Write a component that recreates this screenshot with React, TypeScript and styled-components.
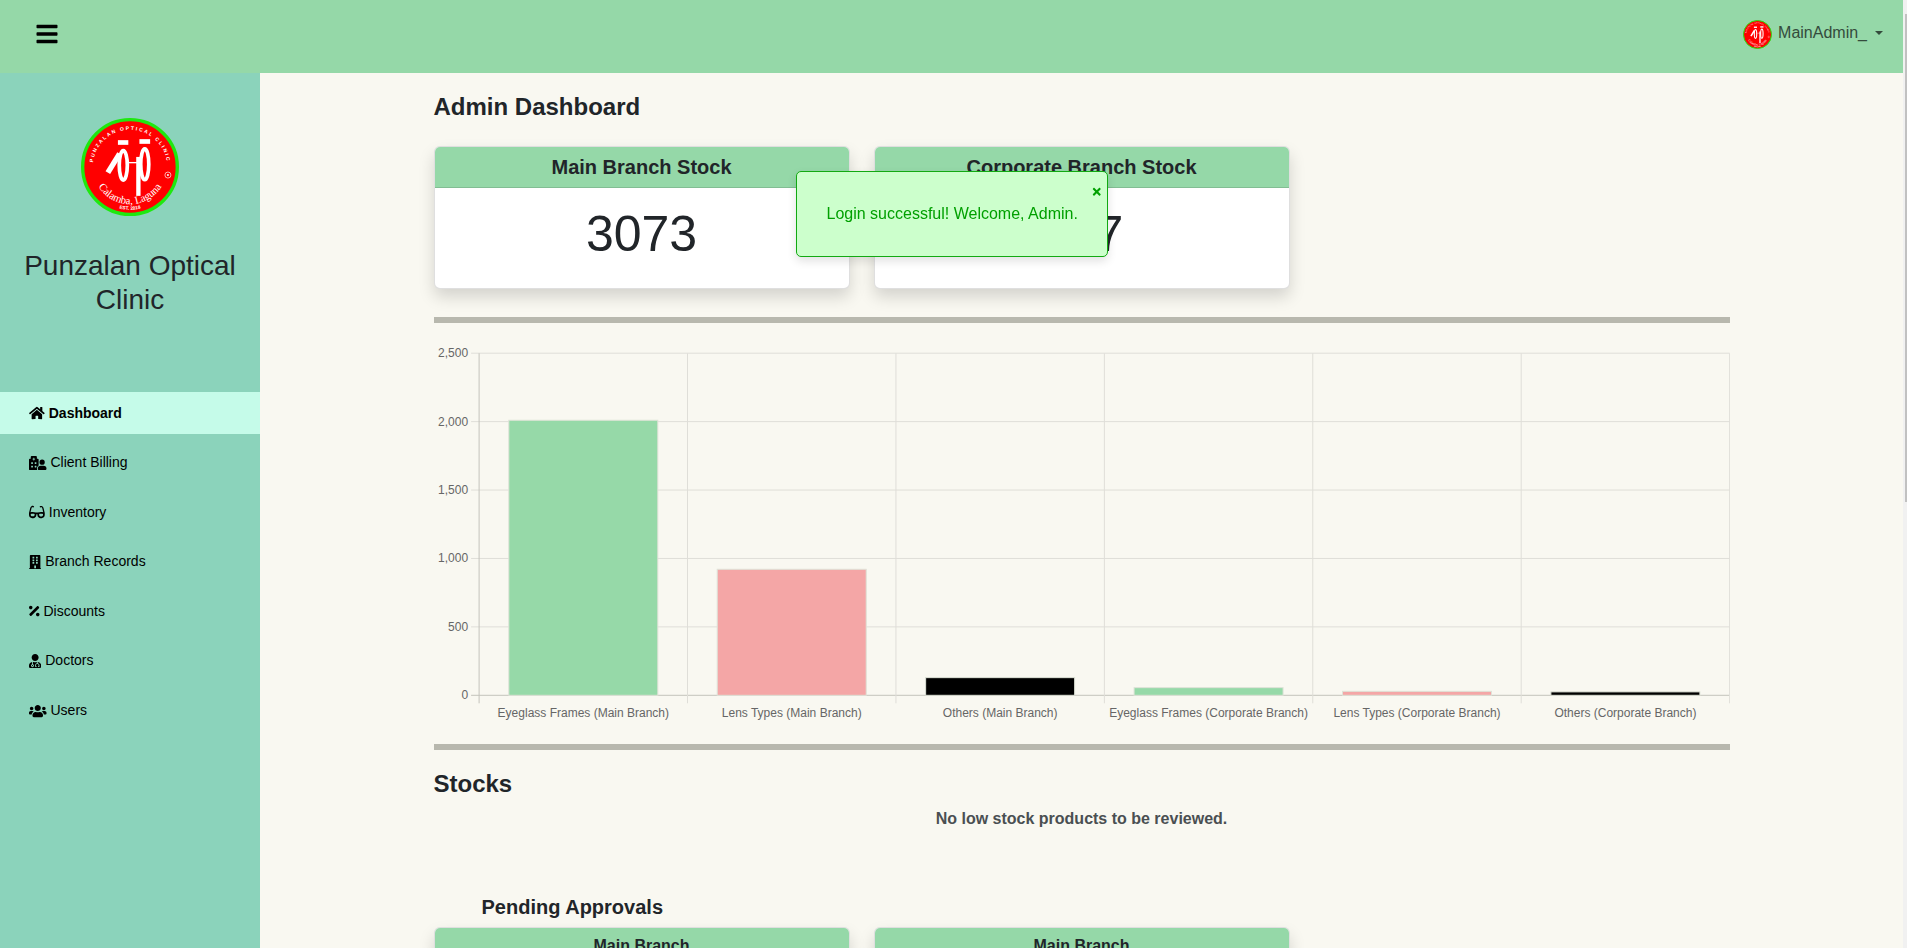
import React from "react";
import styled, { createGlobalStyle } from "styled-components";
import {
  FaBars,
  FaHome,
  FaHospitalUser,
  FaGlasses,
  FaBuilding,
  FaPercentage,
  FaUserMd,
  FaUsers,
  FaTimes,
} from "react-icons/fa";

const Global = createGlobalStyle`
  html::-webkit-scrollbar { display: none; }
  body {
    margin: 0;
    background: #f9f8f1;
    color: #212529;
    font-family: "Liberation Sans", Arial, sans-serif;
    font-size: 16px;
    line-height: 1.5;
  }
  * { box-sizing: border-box; }
`;

const Page = styled.div`
  display: flex;
  flex-direction: column;
  min-height: 1787px;
  padding-right: 4px;
`;

const ScrollTrack = styled.div`
  position: fixed;
  top: 0;
  right: 0;
  z-index: 20;
  width: 4px;
  height: 100vh;
  background: #f1f1f1;
`;

const ScrollThumb = styled.div`
  position: absolute;
  top: 14px;
  right: 0;
  width: 2px;
  height: 488px;
  background: #c1c1c1;
`;

const TopBar = styled.header`
  height: 73px;
  flex: none;
  display: flex;
  align-items: center;
  justify-content: space-between;
  padding: 0 20px 6px 35px;
  background: #95d8a8;
`;

const MenuButton = styled.button`
  display: flex;
  padding: 0;
  border: 0;
  background: none;
  color: #000;
  font-size: 24px;
`;

const UserMenu = styled.div`
  display: flex;
  align-items: center;
  gap: 6px;
  margin-top: 2px;
  color: #344b3c;
`;

const UserName = styled.span`
  margin-bottom: 3px;
`;

const Caret = styled.span`
  width: 0;
  height: 0;
  margin: 0 0 3px 2px;
  border-top: 4.8px solid #344b3c;
  border-left: 4.8px solid transparent;
  border-right: 4.8px solid transparent;
`;

const Body = styled.div`
  flex: 1;
  display: flex;
`;

const Sidebar = styled.aside`
  flex: none;
  width: 260px;
  padding-top: 45px;
  background: #8bd3bb;
`;

const LogoHolder = styled.div`
  display: flex;
  justify-content: center;
`;

const ClinicName = styled.h3`
  margin: 33px 0 0;
  padding: 0 16px;
  font-size: 28px;
  font-weight: 400;
  line-height: 34px;
  text-align: center;
`;

const NavList = styled.nav`
  display: flex;
  flex-direction: column;
  gap: 7.6px;
  margin-top: 75px;
`;

const NavRow = styled.a<{ $active?: boolean }>`
  display: flex;
  align-items: center;
  gap: 4px;
  height: 42px;
  padding-left: 29px;
  color: #000;
  font-size: 14px;
  font-weight: ${(p) => (p.$active ? 700 : 400)};
  background: ${(p) => (p.$active ? "#c5fbe9" : "transparent")};
`;

const NavIcon = styled.span<{ $width: number }>`
  display: flex;
  flex: none;

  svg {
    width: ${(p) => p.$width}px;
    height: 14px;
  }
`;

const Main = styled.main`
  flex: 1;
  min-width: 0;
`;

const Container = styled.div`
  width: 1320px;
  margin: 0 auto;
  padding: 19px 12px 0;
`;

const PageTitle = styled.h4`
  margin: 0;
  font-size: 24px;
  font-weight: 700;
  line-height: 29px;
`;

const CardRow = styled.div<{ $top: number }>`
  display: grid;
  grid-template-columns: repeat(3, 416px);
  column-gap: 24px;
  margin-top: ${(p) => p.$top}px;
`;

const Card = styled.section`
  overflow: hidden;
  border: 1px solid rgba(0, 0, 0, 0.125);
  border-radius: 6px;
  background: #fff;
  box-shadow: 0 8px 16px rgba(0, 0, 0, 0.15);
`;

const CardHeader = styled.div<{ $small?: boolean }>`
  height: 41px;
  border-bottom: 1px solid rgba(0, 0, 0, 0.125);
  background: #95d8a8;
  font-size: ${(p) => (p.$small ? 16 : 20)}px;
  font-weight: 700;
  line-height: ${(p) => (p.$small ? 36 : 41)}px;
  text-align: center;
`;

const CardBody = styled.div<{ $tall?: boolean }>`
  height: ${(p) => (p.$tall ? 220 : 100)}px;
  padding-top: 17px;
  font-size: 50px;
  line-height: 58px;
  text-align: center;
`;

const Rule = styled.hr<{ $top: number }>`
  height: 6px;
  margin: ${(p) => p.$top}px 0 0;
  border: 0;
  background: #b8b8ae;
`;

const ChartFrame = styled.svg`
  display: block;
  width: 1296px;
  height: 421px;
`;

const ChartText = styled.text`
  fill: #666;
  font-family: "Liberation Sans", Arial, sans-serif;
  font-size: 12px;
`;

const SectionTitle = styled.h4`
  margin: 19px 0 0;
  font-size: 24px;
  font-weight: 700;
  line-height: 29px;
`;

const EmptyNote = styled.p`
  margin: 9px 0 0;
  color: #4a4f52;
  font-weight: 700;
  text-align: center;
`;

const SubTitle = styled.h5`
  margin: 64px 0 0 48px;
  font-size: 20px;
  font-weight: 700;
  line-height: 24px;
`;

const Toast = styled.div`
  position: fixed;
  top: 171px;
  left: calc(50% - 2px);
  z-index: 10;
  transform: translateX(-50%);
  width: 312px;
  padding: 30px;
  border: 1px solid #12a912;
  border-radius: 5px;
  background: #ccffcc;
  color: #00a000;
  text-align: center;
  box-shadow: 0 4px 10px rgba(0, 0, 0, 0.12);
  white-space: nowrap;
`;

const ToastClose = styled.span`
  position: absolute;
  top: 14px;
  right: 4.5px;
  display: flex;
  font-size: 11.5px;
`;

const Logo = ({ size }: { size: number }) => (
  <svg width={size} height={size} viewBox="62 54 292 292" aria-label="Punzalan Optical Clinic logo">
    <circle cx="208" cy="200" r="141" fill="#f00" stroke="#1fe80f" strokeWidth="10" />
    <defs>
      <path id="logoTop" d="M98 215 A111 111 0 1 1 318 215" />
      <path id="logoBottom" d="M100 222 A110 110 0 0 0 316 222" />
      <path id="logoEst" d="M118 290 A127 127 0 0 0 298 290" />
    </defs>
    <g fill="#fff" fontFamily="'Liberation Sans', Arial, sans-serif">
      <text fontSize="15" fontWeight="700" letterSpacing="5" textAnchor="middle">
        <textPath href="#logoTop" startOffset="50%">PUNZALAN OPTICAL CLINIC</textPath>
      </text>
      <text fontSize="32" fontFamily="'Liberation Serif', serif" textAnchor="middle">
        <textPath href="#logoBottom" startOffset="50%">Calamba, Laguna</textPath>
      </text>
      <text fontSize="14" fontWeight="700" textAnchor="middle">
        <textPath href="#logoEst" startOffset="50%">EST. 2018</textPath>
      </text>
    </g>
    <circle cx="321" cy="224" r="9" fill="none" stroke="#fff" strokeWidth="2" />
    <circle cx="321" cy="224" r="3" fill="#fff" />
    <g fill="none" stroke="#fff">
      <ellipse cx="188" cy="195" rx="12" ry="44" strokeWidth="11" />
      <ellipse cx="252" cy="192" rx="12" ry="46" strokeWidth="11" />
      <path d="M142 217 L177 160" strokeWidth="16" />
      <path d="M205 187 H240" strokeWidth="4" />
      <path d="M233 170 V286" strokeWidth="13" />
      <path d="M172 127 H203" strokeWidth="14" />
      <path d="M236 124 H268" strokeWidth="14" />
    </g>
  </svg>
);

const navItems = [
  { label: "Dashboard", Icon: FaHome, width: 15.75, active: true },
  { label: "Client Billing", Icon: FaHospitalUser, width: 17.5 },
  { label: "Inventory", Icon: FaGlasses, width: 15.75 },
  { label: "Branch Records", Icon: FaBuilding, width: 12.25 },
  { label: "Discounts", Icon: FaPercentage, width: 10.5 },
  { label: "Doctors", Icon: FaUserMd, width: 12.25 },
  { label: "Users", Icon: FaUsers, width: 17.5 },
];

const AXIS_LEFT = 45.1;
const SLOT = 208.42;
const ZERO = 372.3;
const PER_UNIT = 0.13684;
const TOP = 30.3;
const bars = [
  { label: "Eyeglass Frames (Main Branch)", value: 2010, fill: "#96d9a8" },
  { label: "Lens Types (Main Branch)", value: 921, fill: "#f4a6a6" },
  { label: "Others (Main Branch)", value: 129, fill: "#000" },
  { label: "Eyeglass Frames (Corporate Branch)", value: 56, fill: "#96d9a8" },
  { label: "Lens Types (Corporate Branch)", value: 29, fill: "#f4a6a6" },
  { label: "Others (Corporate Branch)", value: 25, fill: "#000" },
];
const yTicks = [2500, 2000, 1500, 1000, 500, 0];

const StockChart = () => (
  <ChartFrame viewBox="0 0 1296 421">
    {yTicks.map((t) => {
      const y = ZERO - t * PER_UNIT;
      return (
        <g key={t}>
          <line x1={AXIS_LEFT - 8} x2={AXIS_LEFT + SLOT * 6} y1={y} y2={y} stroke={t === 0 ? "#c4c3bc" : "#dfded8"} />
          <ChartText x={AXIS_LEFT - 11} y={y + 4} textAnchor="end">
            {t.toLocaleString("en-US")}
          </ChartText>
        </g>
      );
    })}
    {Array.from({ length: 7 }, (_, i) => (
      <line
        key={i}
        x1={AXIS_LEFT + SLOT * i}
        x2={AXIS_LEFT + SLOT * i}
        y1={TOP}
        y2={ZERO + 8}
        stroke={i === 0 ? "#c4c3bc" : "#dfded8"}
      />
    ))}
    {bars.map((b, i) => {
      const cx = AXIS_LEFT + SLOT * (i + 0.5);
      const h = b.value * PER_UNIT;
      return (
        <g key={b.label}>
          <rect x={cx - 74.5} y={ZERO - h} width={149} height={h} fill={b.fill} stroke="#dfe3d8" strokeWidth="1" />
          <ChartText x={cx} y={ZERO + 22} textAnchor="middle">
            {b.label}
          </ChartText>
        </g>
      );
    })}
  </ChartFrame>
);

export default function App() {
  return (
    <Page>
      <Global />
      <TopBar>
        <MenuButton aria-label="Toggle menu">
          <FaBars />
        </MenuButton>
        <UserMenu>
          <Logo size={29} />
          <UserName>MainAdmin_</UserName>
          <Caret />
        </UserMenu>
      </TopBar>
      <Body>
        <Sidebar>
          <LogoHolder>
            <Logo size={98} />
          </LogoHolder>
          <ClinicName>Punzalan Optical Clinic</ClinicName>
          <NavList>
            {navItems.map(({ label, Icon, width, active }) => (
              <NavRow key={label} $active={active}>
                <NavIcon $width={width}>
                  <Icon />
                </NavIcon>
                {label}
              </NavRow>
            ))}
          </NavList>
        </Sidebar>
        <Main>
          <Container>
            <PageTitle>Admin Dashboard</PageTitle>
            <CardRow $top={25}>
              <Card>
                <CardHeader>Main Branch Stock</CardHeader>
                <CardBody>3073</CardBody>
              </Card>
              <Card>
                <CardHeader>Corporate Branch Stock</CardHeader>
                <CardBody>107</CardBody>
              </Card>
            </CardRow>
            <Rule $top={28} />
            <StockChart />
            <Rule $top={0} />
            <SectionTitle>Stocks</SectionTitle>
            <EmptyNote>No low stock products to be reviewed.</EmptyNote>
            <SubTitle>Pending Approvals</SubTitle>
            <CardRow $top={8}>
              <Card>
                <CardHeader $small>Main Branch</CardHeader>
                <CardBody $tall />
              </Card>
              <Card>
                <CardHeader $small>Main Branch</CardHeader>
                <CardBody $tall />
              </Card>
            </CardRow>
          </Container>
        </Main>
      </Body>
      <Toast>
        Login successful! Welcome, Admin.
        <ToastClose>
          <FaTimes />
        </ToastClose>
      </Toast>
      <ScrollTrack>
        <ScrollThumb />
      </ScrollTrack>
    </Page>
  );
}
